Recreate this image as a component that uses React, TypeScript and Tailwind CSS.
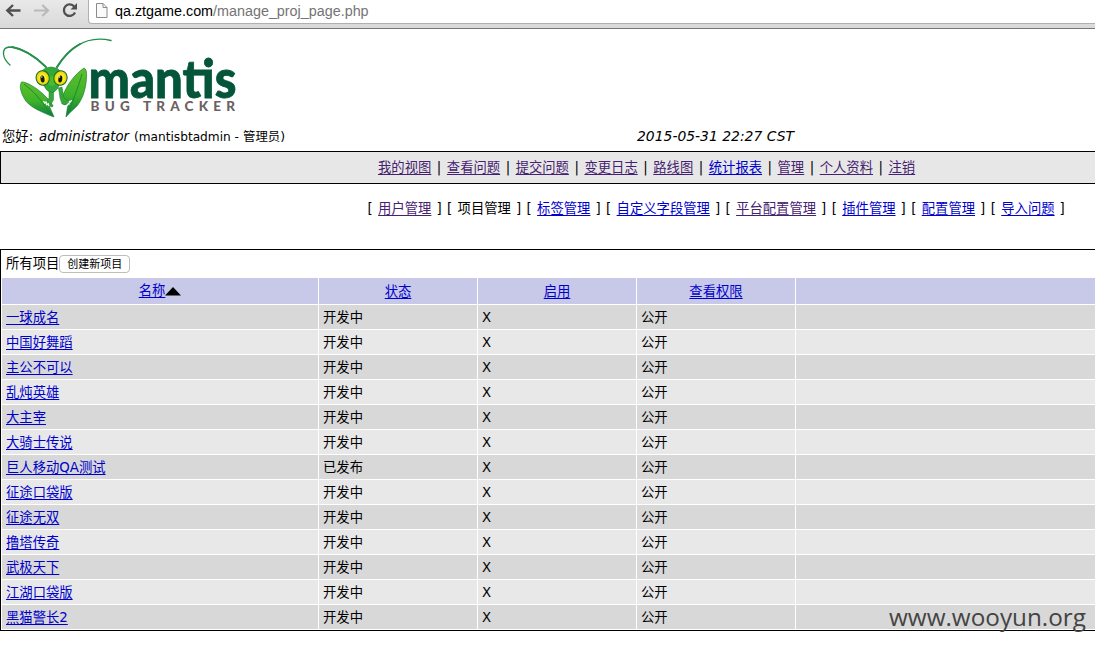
import React from "react";

const link = "text-[#0000cc] underline underline-offset-2 decoration-1";
const visited = "text-[#46216f] underline underline-offset-2 decoration-1";

const mainMenu: [string, boolean][] = [
  ["我的视图", true],
  ["查看问题", true],
  ["提交问题", true],
  ["变更日志", true],
  ["路线图", true],
  ["统计报表", false],
  ["管理", true],
  ["个人资料", true],
  ["注销", true],
];

const manageMenu: [string, string][] = [
  ["用户管理", visited],
  ["项目管理", "text-black"],
  ["标签管理", link],
  ["自定义字段管理", link],
  ["平台配置管理", visited],
  ["插件管理", link],
  ["配置管理", link],
  ["导入问题", link],
];

const projects: [string, string][] = [
  ["一球成名", "开发中"],
  ["中国好舞蹈", "开发中"],
  ["主公不可以", "开发中"],
  ["乱炖英雄", "开发中"],
  ["大主宰", "开发中"],
  ["大骑士传说", "开发中"],
  ["巨人移动QA测试", "已发布"],
  ["征途口袋版", "开发中"],
  ["征途无双", "开发中"],
  ["撸塔传奇", "开发中"],
  ["武极天下", "开发中"],
  ["江湖口袋版", "开发中"],
  ["黑猫警长2", "开发中"],
];

function BrowserBar() {
  return (
    <div className="flex h-[29px] items-start border-b border-[#777] bg-linear-to-b from-[#e9e9e9] to-[#d9d9d9]">
      <svg width="88" height="26" viewBox="0 0 88 26" fill="none">
        <path d="M20.5 10.5H8M13 5l-5.7 5.5L13 16" stroke="#505050" strokeWidth="2.4" />
        <path d="M34 10.5h13M42.300 5l5.700 5.500L42.300 16" stroke="#b9b9b9" strokeWidth="2.2" />
        <path d="M74.300 6.600A5.800 5.800 0 1 0 75 12.500" stroke="#505050" strokeWidth="2.300" />
        <path d="M77 3v6.500h-6.500z" fill="#505050" />
      </svg>
      <div className="flex h-[24px] flex-1 items-start rounded-bl-[4px] border-b border-l border-[#b0b0b0] bg-white pl-[7px]">
        <svg width="12" height="19" viewBox="0 0 12 19" fill="none" stroke="#8b8b8b">
          <path d="M.5 3.500h6.500l4 4v10H.500zM7 3.500v4h4" fill="#fafafa" />
        </svg>
        <div className="ml-[7px] mt-[2px] whitespace-nowrap font-['Liberation_Sans',sans-serif] text-[14.350px] leading-[18px] text-[#747474]">
          <span className="text-black">qa.ztgame.com</span>/manage_proj_page.php
        </div>
      </div>
    </div>
  );
}

function Logo() {
  return (
    <svg className="block" width="245" height="95" viewBox="0 29 245 95">
      <defs>
        <linearGradient id="arm" x1="0" y1="0" x2="0" y2="1">
          <stop offset="0" stopColor="#5fc02a" />
          <stop offset="0.550" stopColor="#3fb22b" />
          <stop offset="1" stopColor="#087b3a" />
        </linearGradient>
        <radialGradient id="eye">
          <stop offset="0.400" stopColor="#fff22a" />
          <stop offset="1" stopColor="#e5c900" />
        </radialGradient>
      </defs>
      <g fill="none" strokeLinecap="round">
        <path d="M46 67C35 56 20 47 9 47C1 48 2 58 10 65" stroke="#278f4d" strokeWidth="1.300" />
        <path d="M46 67C35 56 24 49 12 47" stroke="#278f4d" strokeWidth="1.800" />
        <path d="M57 67C67 52 83 34 111 40.500" stroke="#278f4d" strokeWidth="1.400" />
        <path d="M57 67C63 57 71 49 80 44" stroke="#278f4d" strokeWidth="2" />
      </g>
      <path d="M21.500 82C25 81 37 88 43 94L49 100L52.500 105Q54 106 52 107L49 105.500L54 117C44 113 28 107 24 98C21 92 19 87 21.500 82Z" fill="url(#arm)" stroke="#16813b" strokeWidth="0.700" />
      <path d="M84 68Q87 69 86.500 77C86 90 82 100 77 106C73 110 69 113 66 117L67.500 107L70 102L64 105L62 99C65 87 74 75 84 68Z" fill="url(#arm)" stroke="#16813b" strokeWidth="0.700" />
      <path d="M24 84C33 91 41 99 50 114M82 74C78 88 73 101 67.500 114" fill="none" stroke="#18843a" strokeWidth="0.900" />
      <path d="M49 89V98L47 101L51 104L53.500 100V91ZM58.500 88L60 98L62 104L66 104.500L70 102L64 98L62 87Z" fill="#39a735" stroke="#16813b" strokeWidth="0.500" />
      <path d="M43.500 101l1.200 2 1.300-1 .8 2.800 1.500-1 .6 2.400M71.500 100l-1 2-1-.5-.6 2.600-1.300-.5" fill="none" stroke="white" strokeWidth="1.200" />
      <path d="M45 68.500Q51 65.500 57.500 68.500L63 74L58 88Q54 93 52 92.500Q47 92 44 86L39 73Z" fill="#32a93a" stroke="#16813b" strokeWidth="0.600" />
      <path d="M48 75Q52 78 55 75L56 84Q52 88 48 84Z" fill="#48bb30" />
      <ellipse cx="42.700" cy="78" rx="6.600" ry="7.300" fill="url(#eye)" stroke="#166a29" strokeWidth="1" transform="rotate(-16 42.700 78)" />
      <ellipse cx="60.500" cy="78" rx="6.600" ry="7.300" fill="url(#eye)" stroke="#166a29" strokeWidth="1" transform="rotate(16 60.500 78)" />
      <ellipse cx="42.500" cy="79" rx="2" ry="3.600" fill="#11180b" transform="rotate(-8 42.500 79)" />
      <ellipse cx="60.300" cy="79" rx="2" ry="3.600" fill="#11180b" transform="rotate(8 60.300 79)" />
      <circle cx="41.800" cy="77" r="0.700" fill="white" />
      <circle cx="59.600" cy="77" r="0.700" fill="white" />
      <text x="88.500" y="97.500" textLength="148" lengthAdjust="spacingAndGlyphs" fill="#04553a" stroke="#04553a" strokeWidth="0.800" className="font-['Lato',sans-serif] text-[54px] font-black">mantis</text>
      <text x="90.500" y="111" textLength="144.500" fill="#6b6163" className="font-['Lato',sans-serif] text-[13.500px] font-black">BUG TRACKER</text>
    </svg>
  );
}

export default function App() {
  return (
    <div className="relative h-[647px] w-[1095px] overflow-hidden whitespace-nowrap bg-white font-['DejaVu_Sans','Noto_Sans_CJK_SC',sans-serif] text-[13.330px] leading-[20px] text-black">
      <BrowserBar />
      <Logo />
      <div className="flex h-[27px] pt-[2px]">
        <div className="flex w-[637px] pl-[2px]">
          <svg width="283" height="20" className="overflow-visible">
            <text x="0" y="15" className="text-[13.330px]">您好:</text>
            <text x="37" y="15" textLength="90" lengthAdjust="spacingAndGlyphs" className="text-[13.330px] italic">administrator</text>
            <text x="132" y="15" textLength="105" lengthAdjust="spacingAndGlyphs" className="text-[12px]">(mantisbtadmin -</text>
            <text x="241" y="15" textLength="42" lengthAdjust="spacingAndGlyphs" className="text-[12px]">管理员)</text>
          </svg>
        </div>
        <svg width="160" height="20" className="overflow-visible">
          <text x="0" y="15" textLength="157" lengthAdjust="spacingAndGlyphs" className="text-[13.330px] italic">2015-05-31 22:27 CST</text>
        </svg>
      </div>
      <nav className="flex h-[33px] border-y border-l border-black bg-[#e7e7e7] pl-[377px] pt-[6px]">
        {mainMenu.map(([label, seen], i) => (
          <React.Fragment key={label}>
            {i > 0 && <span className="w-[15.500px] text-center">|</span>}
            <a className={seen ? visited : link}>{label}</a>
          </React.Fragment>
        ))}
      </nav>
      <nav className="flex h-[65px] pl-[367.500px] pt-[15px]">
        {manageMenu.map(([label, style]) => (
          <div key={label} className="flex">
            <span className="w-[10.600px]">[</span>
            <a className={style}>{label}</a>
            <span className="w-[15.600px] pl-[5px]">]</span>
          </div>
        ))}
      </nav>
      <main className="h-[382px] border-y border-l border-black pl-px">
        <div className="flex h-[28px] items-start pl-[4px] pt-[4px]">
          <span>所有项目</span>
          <button className="mt-px h-[18px] w-[71px] rounded-[4px] border border-[#bdbdbd] bg-white text-center text-[11px] leading-[18px]">创建新项目</button>
        </div>
        <div className="grid h-[26px] grid-cols-[316px_158px_158px_158px_1fr] grid-rows-[26px] gap-x-px text-center leading-[28px]">
          <div className="flex items-center justify-center bg-[#c8c8e8]">
            <a className={link}>名称</a>
            <svg width="16" height="9" viewBox="0 0 16 9"><path d="M0 8.500L8 0L16 8.500Z" /></svg>
          </div>
          <div className="bg-[#c8c8e8]"><a className={link}>状态</a></div>
          <div className="bg-[#c8c8e8]"><a className={link}>启用</a></div>
          <div className="bg-[#c8c8e8]"><a className={link}>查看权限</a></div>
          <div className="bg-[#c8c8e8]" />
        </div>
        {projects.map(([name, status], i) => {
          const cell = i % 2 === 0 ? "h-[24px] bg-[#d8d8d8] pl-[4px]" : "h-[24px] bg-[#e8e8e8] pl-[4px]";
          return (
            <div key={name} className="mt-px grid h-[24px] grid-cols-[316px_158px_158px_158px_1fr] gap-x-px leading-[26px]">
              <div className={cell}><a className={link}>{name}</a></div>
              <div className={cell}>{status}</div>
              <div className={cell}>X</div>
              <div className={cell}>公开</div>
              <div className={cell} />
            </div>
          );
        })}
      </main>
      <div className="absolute left-[889px] top-[602px] font-['Open_Sans',sans-serif] text-[24px] leading-[32px] text-[#444]">
        <svg width="200" height="32" className="overflow-visible">
          <text x="0" y="24" textLength="197" lengthAdjust="spacingAndGlyphs" fill="#444">www.wooyun.org</text>
        </svg>
      </div>
    </div>
  );
}
